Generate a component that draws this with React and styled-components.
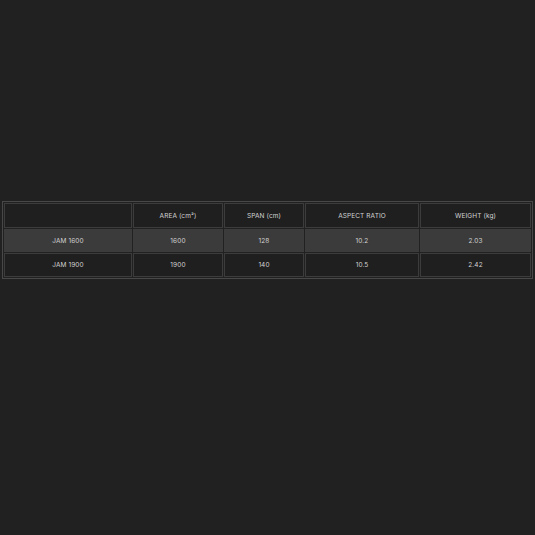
import React from 'react';
import styled, { createGlobalStyle } from 'styled-components';

const GlobalStyle = createGlobalStyle`
  html, body {
    margin: 0;
    padding: 0;
    background: #212121;
  }
  body {
    font-family: Inter, "Open Sans", sans-serif;
  }
`;

const Page = styled.div`
  height: 535px;
  padding: 201px 2px 0 2px;
  box-sizing: border-box;
`;

const Table = styled.table`
  border-collapse: separate;
  border-spacing: 1px;
  border: 1px solid #484848;
  table-layout: fixed;
`;

const Cell = styled.td`
  border: 1px solid #3c3c3c;
  height: ${(p) => p.$h}px;
  padding: 0;
  box-sizing: border-box;
  text-align: center;
  font-size: 6.5px;
  font-weight: 400;
  letter-spacing: 0.1px;
  color: #d2d2d2;
  background: ${(p) => p.$bg};
`;

const cols = [128, 90, 80, 114, 111];
const head = ['', 'AREA (cm²)', 'SPAN (cm)', 'ASPECT RATIO', 'WEIGHT (kg)'];
const rows = [
  { bg: '#3b3b3b', cells: ['JAM 1600', '1600', '128', '10.2', '2.03'] },
  { bg: '#1f1f1f', cells: ['JAM 1900', '1900', '140', '10.5', '2.42'] },
];

export default function App() {
  return (
    <Page>
      <GlobalStyle />
      <Table>
        <colgroup>
          {cols.map((w, i) => (
            <col key={i} style={{ width: w }} />
          ))}
        </colgroup>
        <thead>
          <tr>
            {head.map((h, i) => (
              <Cell as="th" key={i} $h={25} $bg="#1f1f1f">
                {h}
              </Cell>
            ))}
          </tr>
        </thead>
        <tbody>
          {rows.map((r, i) => (
            <tr key={i}>
              {r.cells.map((c, j) => (
                <Cell key={j} $h={i === 0 ? 23 : 24} $bg={r.bg}>
                  {c}
                </Cell>
              ))}
            </tr>
          ))}
        </tbody>
      </Table>
    </Page>
  );
}
